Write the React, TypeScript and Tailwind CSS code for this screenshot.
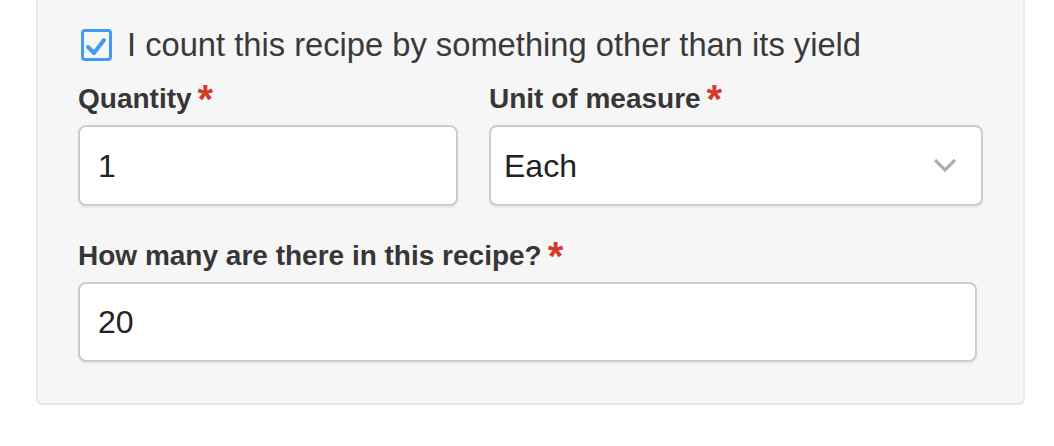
const font = { fontFamily: '"Liberation Sans", Arial, sans-serif' };

function Label({ text }: { text: string }) {
  return (
    <div className="h-[28px] whitespace-nowrap text-[28px] font-bold leading-[28px] text-[#363636]">
      {text}
      <span className="relative top-[5px] ml-[6px] text-[40px] leading-[0] text-[#d33a2c]">
        *
      </span>
    </div>
  );
}

const field =
  "flex h-[81px] items-center rounded-[8px] border-2 border-[#c9cdcc] bg-white text-[32px] text-[#222] shadow-[0_2px_2px_rgba(0,0,0,0.06)]";

export default function App() {
  return (
    <div className="h-[446px] w-[1054px] bg-white" style={font}>
      <div className="ml-[36px] w-[989px] rounded-b-[6px] border-x-2 border-b-2 border-[#e8e8e8] bg-[#f6f6f6] pb-[41px] pl-[40px] pt-[29px]">
        <label className="flex h-[32px] items-center gap-[15px]">
          <span className="ml-[3px] flex h-[32px] w-[31px] items-center justify-center rounded-[4px] border-[3px] border-[#3f9cf0]">
            <svg width="25" height="26" viewBox="0 0 25 26" fill="none">
              <path
                d="M4 15 L10 21 L20 8"
                stroke="#3f9cf0"
                strokeWidth="4"
                strokeLinecap="round"
                strokeLinejoin="round"
              />
            </svg>
          </span>
          <span className="text-[32.7px] leading-none text-[#3a3a3a]">
            I count this recipe by something other than its yield
          </span>
        </label>

        <div className="mt-[24px] flex gap-[31px]">
          <div className="w-[380px]">
            <Label text="Quantity" />
            <div className={`${field} mt-[12px] px-[18px]`}>1</div>
          </div>
          <div className="w-[494px]">
            <Label text="Unit of measure" />
            <div className={`${field} mt-[12px] justify-between pl-[13px] pr-[24px]`}>
              <span>Each</span>
              <svg width="24" height="15" viewBox="0 0 24 15" fill="none">
                <path d="M2 2 L12 12 L22 2" stroke="#b0b0b0" strokeWidth="3.2" />
              </svg>
            </div>
          </div>
        </div>

        <div className="mt-[36px] w-[899px]">
          <Label text="How many are there in this recipe?" />
          <div className={`${field} mt-[12px] !h-[80px] px-[18px]`}>20</div>
        </div>
      </div>
    </div>
  );
}
